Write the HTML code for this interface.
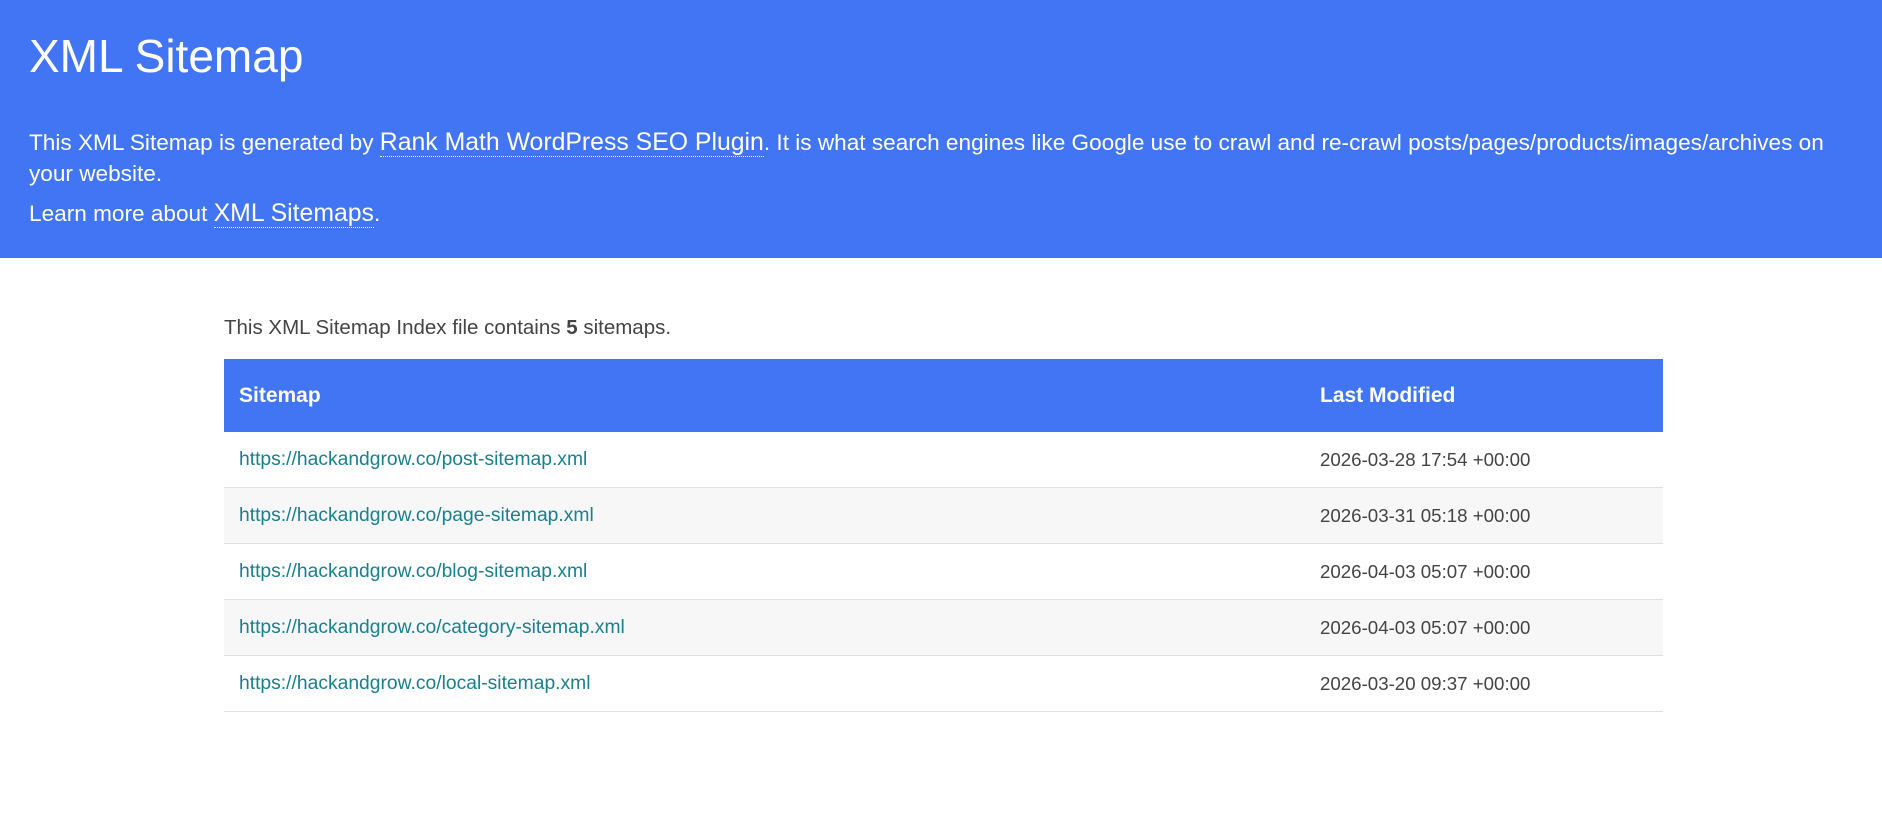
<!DOCTYPE html>
<html><head><meta charset="utf-8">
<style>
html,body{margin:0;padding:0;background:#fff;}
body{width:1882px;height:829px;overflow:hidden;font-family:"Liberation Sans",sans-serif;color:#444;}
#hd{background:#4275f4;height:258px;color:#fff;position:relative;}
#hd h1{position:absolute;left:29px;top:27px;margin:0;font-weight:normal;font-size:46px;line-height:58px;}
#hd p{position:absolute;left:29px;margin:0;font-size:22.6px;line-height:30px;white-space:nowrap;}
#hd a{color:#fff;text-decoration:none;border-bottom:1px dotted #fff;font-size:24.8px;}
#intro{position:absolute;left:224px;top:312px;font-size:20.5px;}
table{position:absolute;left:224px;top:359px;width:1439px;border-collapse:collapse;font-size:18.7px;}
th{background:#4275f4;color:#fff;text-align:left;height:73px;padding:0 15px;font-size:21px;}
td{height:55px;padding:0 15px;border-bottom:1px solid #e0e0e0;}
tr.alt td{background:#f7f7f7;}
td a{color:#1a7f8e;text-decoration:none;font-size:19.3px;}
.c2{width:328px;}
</style></head><body>
<div id="hd">
<h1>XML Sitemap</h1>
<p style="top:128px">This XML Sitemap is generated by <a>Rank Math WordPress SEO Plugin</a>. It is what search engines like Google use to crawl and re-crawl posts/pages/products/images/archives on</p>
<p style="top:159px">your website.</p>
<p style="top:199px">Learn more about <a>XML Sitemaps</a>.</p>
</div>
<div id="intro" style="top:316px">This XML Sitemap Index file contains <b>5</b> sitemaps.</div>
<table>
<tr><th>Sitemap</th><th class="c2">Last Modified</th></tr>
<tr><td><a>https://hackandgrow.co/post-sitemap.xml</a></td><td>2026-03-28 17:54 +00:00</td></tr>
<tr class="alt"><td><a>https://hackandgrow.co/page-sitemap.xml</a></td><td>2026-03-31 05:18 +00:00</td></tr>
<tr><td><a>https://hackandgrow.co/blog-sitemap.xml</a></td><td>2026-04-03 05:07 +00:00</td></tr>
<tr class="alt"><td><a>https://hackandgrow.co/category-sitemap.xml</a></td><td>2026-04-03 05:07 +00:00</td></tr>
<tr><td><a>https://hackandgrow.co/local-sitemap.xml</a></td><td>2026-03-20 09:37 +00:00</td></tr>
</table>
</body></html>
